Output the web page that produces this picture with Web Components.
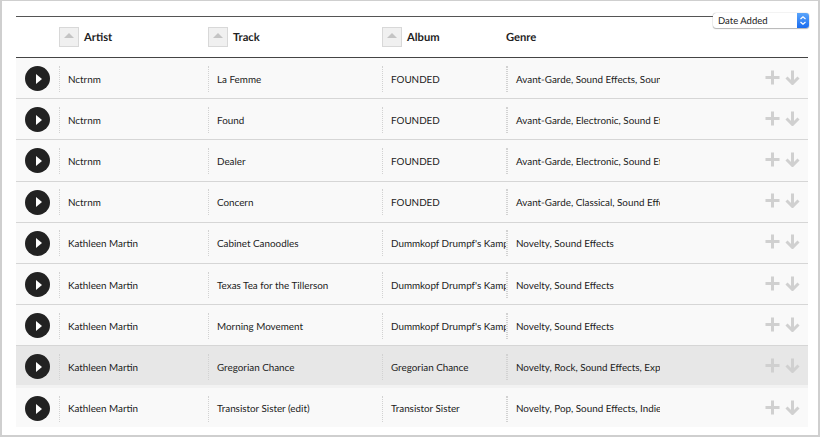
<!DOCTYPE html>
<html>
<head>
<meta charset="utf-8">
<title>Tracks</title>
<style>
  html, body { margin: 0; height: 100%; background: #fff; }
  body { font-family: Lato, "Liberation Sans", sans-serif; color: #222; text-rendering: geometricPrecision; }
</style>
</head>
<body>
<track-page></track-page>
<script>
const COLUMNS = '43px 149px 174px 125px 153px 1fr';

class SortHead extends HTMLElement {
  constructor() {
    super();
    this.attachShadow({ mode: 'open' });
    this.shadowRoot.innerHTML = `
      <style>
        :host { display: flex; align-items: center; gap: 5px; font-size: 11.2px; font-weight: 700; color: #222; }
        :host([plain]) { margin-left: -1px; }
        .btn { width: 18px; height: 18px; border: 1px solid #d8d8d8; background: #f0f0f0; display: flex; align-items: center; justify-content: center; }
        .btn i { width: 0; height: 0; border: 5px solid transparent; border-top: 0; border-bottom: 5px solid #c4c4c4; margin-top: -3px; }
      </style>
      ${this.hasAttribute('plain') ? '' : '<span class="btn"><i></i></span>'}
      <slot></slot>
    `;
  }
}

class DateSelect extends HTMLElement {
  constructor() {
    super();
    this.attachShadow({ mode: 'open' });
    this.shadowRoot.innerHTML = `
      <style>
        :host { position: absolute; top: 12px; left: 711px; width: 96px; height: 15px; display: flex; background: #fff; border-radius: 3px; box-shadow: 0 0 1px 0 #888, 0 1px 1px #bbb; font-size: 9.500px; color: #222; }
        .label { flex: 1; padding-left: 5px; line-height: 17px; }
        .arrows { width: 12px; border-radius: 0 3px 3px 0; background: linear-gradient(#5aa5fb, #1a6cf0); display: flex; align-items: center; justify-content: center; }
      </style>
      <span class="label"><slot></slot></span>
      <span class="arrows">
        <svg width="8" height="11" viewBox="0 0 8 11" fill="none" stroke="#fff" stroke-width="1.2"><path d="M1.5 4 4 1.8 6.500 4M1.500 7 4 9.200 6.500 7"/></svg>
      </span>
    `;
  }
}

class TrackRow extends HTMLElement {
  constructor() {
    super();
    this.attachShadow({ mode: 'open' });
  }

  connectedCallback() {
    const cells = ['artist', 'track', 'album', 'genre'].map(k => `<div class="cell">${this.getAttribute(k)}</div>`).join('');
    this.shadowRoot.innerHTML = `
      <style>
        :host { display: grid; grid-template-columns: ${COLUMNS}; height: 41.2px; padding-top: 1px; box-sizing: border-box; align-items: center; background: #f9f9f9; border-bottom: 1px solid #d6d6d6; font-size: 9.85px; color: #1c1c1c; }
        :host([active]) { background: #e7e7e7; border-bottom-color: #f2f2f2; box-shadow: inset 0 -2px 0 #f2f2f2; }
        :host([last]) { border-bottom: 0; height: 39px; padding-top: 3px; }
        :host([last]) .cell { line-height: 26px; }
        .play { width: 25px; height: 25px; border-radius: 50%; background: #222; margin-left: 9px; display: flex; align-items: center; justify-content: center; }
        .play i { width: 0; height: 0; border-left: 6px solid #fff; border-top: 5px solid transparent; border-bottom: 5px solid transparent; margin-left: 2px; }
        .cell { height: 26px; line-height: 28px; padding-left: 8px; border-left: 1px dotted #d2d2d2; box-sizing: border-box; white-space: nowrap; overflow: hidden; }
        .cell:nth-of-type(4) { border-right: 1px dotted #d2d2d2; }
        .actions { display: flex; justify-content: flex-end; gap: 5px; padding-right: 8px; margin-top: -3px; }
      </style>
      <div class="play"><i></i></div>
      ${cells}
      <div class="actions">
        <svg width="15" height="15" viewBox="0 0 15 15" stroke="#d0d0d0" stroke-width="3" fill="none"><path d="M7.500 .5v14M.5 7.500h14"/></svg>
        <svg width="15" height="15" viewBox="0 0 15 15" stroke="#d0d0d0" stroke-width="3" fill="none"><path d="M7.500 .5v12.500M1.500 7.500l6 6 6-6"/></svg>
      </div>
    `;
  }
}

class TrackPage extends HTMLElement {
  constructor() {
    super();
    this.attachShadow({ mode: 'open' });
    const kath = 'Kathleen Martin';
    const dk = "Dummkopf Drumpf's Kampf";
    const rows = [
      ['Nctrnm', 'La Femme', 'FOUNDED', 'Avant-Garde, Sound Effects, Soundtrack'],
      ['Nctrnm', 'Found', 'FOUNDED', 'Avant-Garde, Electronic, Sound Effects'],
      ['Nctrnm', 'Dealer', 'FOUNDED', 'Avant-Garde, Electronic, Sound Effects'],
      ['Nctrnm', 'Concern', 'FOUNDED', 'Avant-Garde, Classical, Sound Effects'],
      [kath, 'Cabinet Canoodles', dk, 'Novelty, Sound Effects'],
      [kath, 'Texas Tea for the Tillerson', dk, 'Novelty, Sound Effects'],
      [kath, 'Morning Movement', dk, 'Novelty, Sound Effects'],
      [kath, 'Gregorian Chance', 'Gregorian Chance', 'Novelty, Rock, Sound Effects, Experimental'],
      [kath, 'Transistor Sister (edit)', 'Transistor Sister', 'Novelty, Pop, Sound Effects, Indie'],
    ];
    this.shadowRoot.innerHTML = `
      <style>
        :host { display: block; position: relative; width: 820px; height: 437px; box-sizing: border-box; border: solid #cfcfcf; border-width: 1px 2px 2px 2px; padding: 15px 10px 0 14px; overflow: hidden; }
        .head { display: grid; grid-template-columns: ${COLUMNS}; height: 42px; box-sizing: border-box; align-items: center; border-top: 1px solid #555; border-bottom: 1px solid #444; }
      </style>
      <div class="head">
        <span></span>
        <sort-head>Artist</sort-head>
        <sort-head>Track</sort-head>
        <sort-head>Album</sort-head>
        <sort-head plain>Genre</sort-head>
      </div>
      ${rows.map((r, i) => `<track-row artist="${r[0]}" track="${r[1]}" album="${r[2]}" genre="${r[3]}"${i === 7 ? ' active' : ''}${i === 8 ? ' last' : ''}></track-row>`).join('')}
      <date-select>Date Added</date-select>
    `;
  }
}

customElements.define('sort-head', SortHead);
customElements.define('date-select', DateSelect);
customElements.define('track-row', TrackRow);
customElements.define('track-page', TrackPage);
</script>
</body>
</html>
